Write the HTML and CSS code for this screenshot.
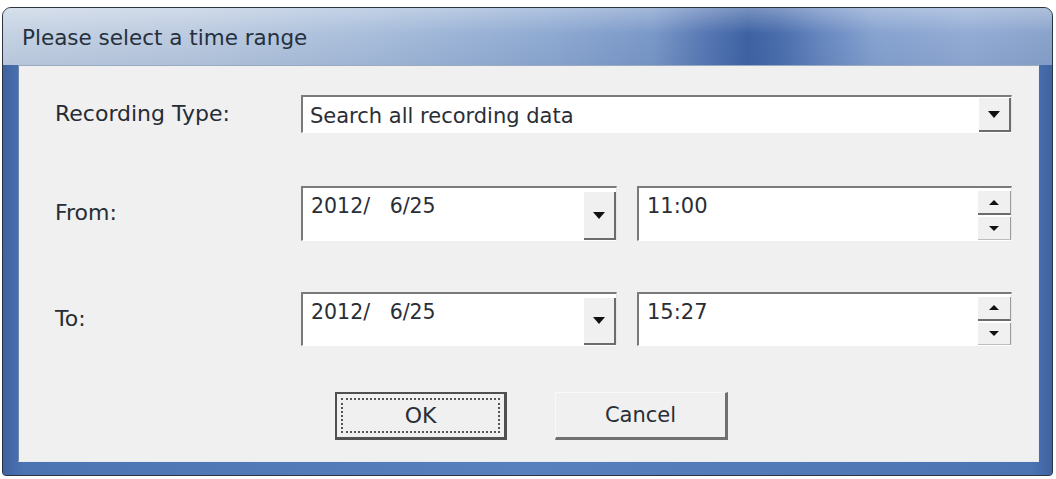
FILE: index.html
```html
<!DOCTYPE html>
<html>
<head>
<meta charset="utf-8">
<link rel="stylesheet" href="styles.css">
</head>
<body>
<div class="window">
  <div class="titlebar"><span class="title">Please select a time range</span></div>
  <div class="frame">
    <div class="client">
      <div class="row row-type">
        <div class="label">Recording Type:</div>
        <div class="combo">
          <span class="combo-text">Search all recording data</span>
          <span class="combo-btn"><span class="tri-down"></span></span>
        </div>
      </div>
      <div class="row row-from">
        <div class="label">From:</div>
        <div class="date">
          <span class="field-text">2012/&nbsp;&nbsp; 6/25</span>
          <span class="date-btn"><span class="tri-down"></span></span>
        </div>
        <div class="time">
          <span class="field-text time-text">11:00</span>
          <span class="spin">
            <span class="spin-btn"><span class="tri-up"></span></span>
            <span class="spin-btn"><span class="tri-down small"></span></span>
          </span>
        </div>
      </div>
      <div class="row row-to">
        <div class="label">To:</div>
        <div class="date">
          <span class="field-text">2012/&nbsp;&nbsp; 6/25</span>
          <span class="date-btn"><span class="tri-down"></span></span>
        </div>
        <div class="time">
          <span class="field-text time-text">15:27</span>
          <span class="spin">
            <span class="spin-btn"><span class="tri-up"></span></span>
            <span class="spin-btn"><span class="tri-down small"></span></span>
          </span>
        </div>
      </div>
      <div class="buttons">
        <div class="btn btn-default"><span class="focus">OK</span></div>
        <div class="btn">Cancel</div>
      </div>
    </div>
  </div>
</div>
</body>
</html>
```
FILE: styles.css
```css
html, body {
  margin: 0;
  padding: 0;
  background: #ffffff;
}
body {
  width: 1056px;
  height: 479px;
  overflow: hidden;
  font-family: "DejaVu Sans", "Liberation Sans", sans-serif;
}
.window {
  margin: 7px 0 0 2px;
  width: 1049px;
  height: 467px;
  border: 1px solid #2c3440;
  border-radius: 9px 9px 4px 4px;
  overflow: hidden;
  display: flex;
  flex-direction: column;
  background: #4c72ad;
}
.titlebar {
  height: 57px;
  flex: none;
  display: flex;
  align-items: center;
  padding-left: 19px;
  background:
    linear-gradient(to bottom, rgba(255,255,255,0.3), rgba(255,255,255,0) 45%, rgba(60,90,140,0.1) 100%),
    linear-gradient(to right, #c5d2e3 0%, #bccbe0 18%, #a9bedb 35%, #8faad2 52%, #7a98c8 62%, #5677b3 67%, #3d62a3 71%, #4a6dac 74%, #6787c0 78%, #86a2cf 83%, #93acd5 92%, #8aa3cb 100%);
}
.title {
  font-size: 21.5px;
  color: #26303c;
  margin-top: 2px;
}
.frame {
  flex: 1;
  padding: 0 13px 13px 15px;
  background: linear-gradient(to right, #3f63a0, #4c74b2 2%, #5880bc 50%, #4c74b2 98%, #3f63a0);
  display: flex;
}
.client {
  flex: 1;
  background: #f0f0f0;
  border: 1px solid #e8ecf2;
  border-top-color: #9aaac0;
  border-left-color: #6e88b0;
  display: flex;
  flex-direction: column;
  padding: 29px 0 0 36px;
  box-sizing: border-box;
}
.row {
  display: flex;
  align-items: center;
}
.row-from { margin-top: 53px; }
.row-to { margin-top: 51px; }
.label {
  width: 246px;
  flex: none;
  font-size: 22px;
  color: #262c35;
  margin-top: -2px;
}
.combo, .date, .time {
  background: #ffffff;
  border-top: 2px solid #7a7a7a;
  border-left: 2px solid #7a7a7a;
  border-right: 1px solid #e6e6e6;
  border-bottom: 1px solid #ffffff;
  box-sizing: border-box;
  display: flex;
  position: relative;
  color: #2a2e36;
  font-size: 20.5px;
}
.combo {
  width: 711px;
  height: 38px;
  align-items: center;
  padding-left: 7px;
  font-size: 21px;
}
.combo-text { flex: 1; margin-top: 2px; }
.combo-btn, .date-btn {
  flex: none;
  width: 32px;
  background: #f0f0f0;
  border-right: 2px solid #6c6c6c;
  border-bottom: 2px solid #6c6c6c;
  box-sizing: border-box;
  display: flex;
  align-items: center;
  justify-content: center;
}
.combo-btn {
  height: 34px;
  align-self: flex-start;
  margin-top: 1px;
}
.date, .time {
  height: 55px;
  align-items: flex-start;
  padding-left: 8px;
}
.row-to .date, .row-to .time { height: 54px; }
.date { width: 316px; }
.time { width: 375px; margin-left: 20px; }
.field-text {
  flex: 1;
  padding-top: 6px;
  line-height: 24px;
}
.time-text {
  font-size: 21px;
}
.date-btn {
  margin-top: 4px;
  align-self: stretch;
}
.spin {
  flex: none;
  width: 33px;
  display: flex;
  flex-direction: column;
  gap: 2px;
  padding-top: 3px;
  align-self: stretch;
}
.spin-btn {
  flex: 1;
  background: #f0f0f0;
  border-right: 1px solid #9a9a9a;
  border-bottom: 2px solid #6c6c6c;
  display: flex;
  align-items: center;
  justify-content: center;
}
.spin-btn + .spin-btn {
  border-bottom: 1px solid #bdbdbd;
}
.tri-down {
  width: 0;
  height: 0;
  border-left: 6px solid transparent;
  border-right: 6px solid transparent;
  border-top: 7px solid #111111;
}
.tri-down.small {
  border-left-width: 5px;
  border-right-width: 5px;
  border-top-width: 5px;
}
.tri-up {
  width: 0;
  height: 0;
  border-left: 5px solid transparent;
  border-right: 5px solid transparent;
  border-bottom: 5px solid #111111;
}
.buttons {
  display: flex;
  margin-top: 46px;
  padding-left: 280px;
  gap: 48px;
}
.btn {
  width: 173px;
  height: 48px;
  box-sizing: border-box;
  background: #f0f0f0;
  border-top: 1px solid #f8f8f8;
  border-left: 1px solid #f8f8f8;
  border-right: 3px solid #707070;
  border-bottom: 3px solid #707070;
  display: flex;
  align-items: center;
  justify-content: center;
  font-size: 21px;
  color: #2a2e36;
}
.btn-default {
  width: 172px;
  border: 2px solid #505050;
  border-right-width: 3px;
  border-bottom-width: 3px;
  padding: 4px;
  font-size: 22px;
}
.focus {
  flex: 1;
  align-self: stretch;
  border: 2px dotted #555555;
  display: flex;
  align-items: center;
  justify-content: center;
}
```
